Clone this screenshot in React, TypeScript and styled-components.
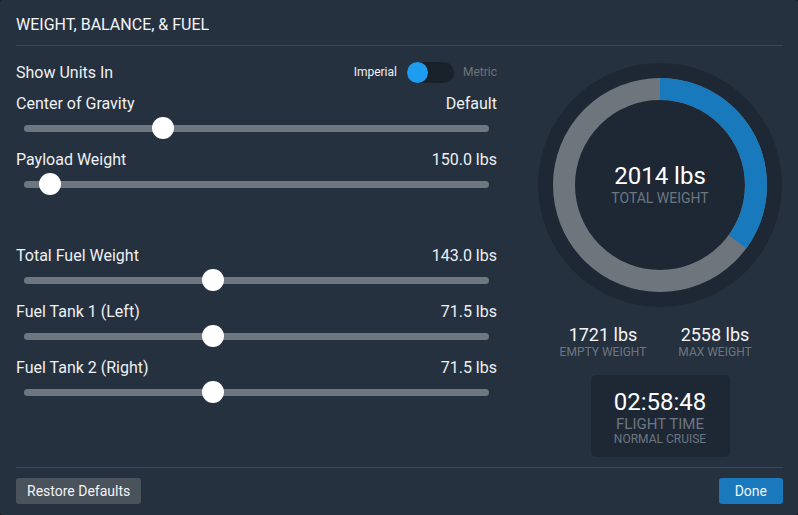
import React from "react";
import styled, { createGlobalStyle } from "styled-components";

const Global = createGlobalStyle`
  html, body { margin: 0; padding: 0; background: #151a22; }
  body { font-family: Roboto, "Noto Sans", sans-serif; }
  * { box-sizing: border-box; }
`;

const Panel = styled.div`
  width: 798px;
  height: 515px;
  background: #263140;
  border-radius: 3px;
  color: #f2f4f6;
  display: flex;
  flex-direction: column;
  overflow: hidden;
`;

const Header = styled.div`
  margin: 0 15px 0 16px;
  height: 46px;
  border-bottom: 1px solid #3b4756;
  display: flex;
  align-items: center;
  padding-top: 3px;
`;

const Title = styled.h1`
  margin: 0;
  font-size: 16px;
  font-weight: 400;
  letter-spacing: 0;
  color: #f4f5f7;
`;

const Body = styled.div`
  flex: 1;
  display: flex;
  padding: 15px 16px 0 16px;
`;

const LeftCol = styled.div`
  width: 481px;
  display: flex;
  flex-direction: column;
  gap: 10px;
`;

const RightCol = styled.div`
  margin-left: 41px;
  width: 244px;
  display: flex;
  flex-direction: column;
  align-items: center;
  padding-top: 2px;
`;

const Row = styled.div`
  display: flex;
  justify-content: space-between;
  align-items: center;
  height: ${(p: { $h?: number }) => p.$h ?? 20}px;
`;

const Label = styled.span`
  font-size: 16px;
  color: #eef0f2;
`;

const Value = styled.span`
  font-size: 16px;
  color: #eef0f2;
`;

const UnitPick = styled.div`
  display: flex;
  align-items: center;
`;

const UnitText = styled.span<{ $on?: boolean }>`
  font-size: 12px;
  color: ${(p) => (p.$on ? "#eef0f2" : "#6b747e")};
`;

const Toggle = styled.div`
  width: 47px;
  height: 21px;
  border-radius: 11px;
  background: #19212b;
  margin: 0 9px 0 10px;
  display: flex;
  align-items: center;
`;

const Knob = styled.div`
  width: 21px;
  height: 21px;
  border-radius: 50%;
  background: #1e9cf0;
`;

const SliderBlock = styled.div`
  display: flex;
  flex-direction: column;
`;

const TrackArea = styled.div`
  position: relative;
  height: 22px;
  margin: 4px 8px 0 8px;
  display: flex;
  align-items: center;
`;

const Track = styled.div`
  width: 100%;
  height: 7px;
  border-radius: 4px;
  background: #6e7780;
`;

const Thumb = styled.div`
  position: absolute;
  top: 0;
  width: 22px;
  height: 22px;
  margin-left: -11px;
  border-radius: 50%;
  background: #ffffff;
`;

const Spacer = styled.div`
  height: ${(p: { $h: number }) => p.$h}px;
`;

const Donut = styled.div`
  position: relative;
  width: 244px;
  height: 244px;
`;

const DonutCenter = styled.div`
  position: absolute;
  inset: 0;
  display: flex;
  flex-direction: column;
  align-items: center;
  justify-content: center;
  padding-bottom: 2px;
`;

const BigNum = styled.div`
  font-size: 24px;
  line-height: 28px;
  color: #ffffff;
`;

const Caption = styled.div<{ $size: number; $lh?: number }>`
  font-size: ${(p) => p.$size}px;
  line-height: ${(p) => p.$lh ?? p.$size + 2}px;
  color: #6d7680;
  text-transform: uppercase;
`;

const Stats = styled.div`
  display: grid;
  grid-template-columns: 112px 112px;
  margin-top: 17px;
  margin-left: -2px;
`;

const Stat = styled.div`
  display: flex;
  flex-direction: column;
  align-items: center;
`;

const StatNum = styled.div`
  font-size: 18px;
  line-height: 21px;
  color: #f4f5f7;
`;

const TimeBox = styled.div`
  margin-top: 16px;
  width: 139px;
  height: 82px;
  border-radius: 5px;
  background: #1e2835;
  display: flex;
  flex-direction: column;
  align-items: center;
  padding-top: 13px;
`;

const Footer = styled.div`
  margin: 0 15px 0 16px;
  border-top: 1px solid #3b4756;
  height: 48px;
  display: flex;
  justify-content: space-between;
  align-items: flex-start;
  padding-top: 10px;
`;

const Button = styled.button<{ $primary?: boolean }>`
  height: 26px;
  border: none;
  border-radius: 3px;
  padding: 0 ${(p) => (p.$primary ? 16 : 11)}px;
  font-family: Roboto, "Noto Sans", sans-serif;
  font-size: 14px;
  color: #f2f4f6;
  background: ${(p) => (p.$primary ? "#1a79bd" : "#4a525c")};
`;

function Slider({ label, value, pos }: { label: string; value: string; pos: number }) {
  return (
    <SliderBlock>
      <Row>
        <Label>{label}</Label>
        <Value>{value}</Value>
      </Row>
      <TrackArea>
        <Track />
        <Thumb style={{ left: `${pos * 100}%` }} />
      </TrackArea>
    </SliderBlock>
  );
}

function WeightRing({ frac }: { frac: number }) {
  const r = 96;
  const c = 2 * Math.PI * r;
  return (
    <svg width="244" height="244" viewBox="0 0 244 244">
      <circle cx="122" cy="122" r="122" fill="#1e2835" />
      <circle cx="122" cy="122" r={r} fill="none" stroke="#6e757d" strokeWidth="22" />
      <circle
        cx="122"
        cy="122"
        r={r}
        fill="none"
        stroke="#1879bd"
        strokeWidth="22"
        strokeDasharray={`${c * frac} ${c}`}
        transform="rotate(-90 122 122)"
      />
    </svg>
  );
}

export default function App() {
  const empty = 1721;
  const max = 2558;
  const total = 2014;
  return (
    <>
      <Global />
      <Panel>
        <Header>
          <Title>WEIGHT, BALANCE, &amp; FUEL</Title>
        </Header>
        <Body>
          <LeftCol>
            <Row $h={22}>
              <Label>Show Units In</Label>
              <UnitPick>
                <UnitText $on>Imperial</UnitText>
                <Toggle>
                  <Knob />
                </Toggle>
                <UnitText>Metric</UnitText>
              </UnitPick>
            </Row>
            <Slider label="Center of Gravity" value="Default" pos={0.299} />
            <Slider label="Payload Weight" value="150.0 lbs" pos={0.056} />
            <Spacer $h={30} />
            <Slider label="Total Fuel Weight" value="143.0 lbs" pos={0.406} />
            <Slider label="Fuel Tank 1 (Left)" value="71.5 lbs" pos={0.406} />
            <Slider label="Fuel Tank 2 (Right)" value="71.5 lbs" pos={0.406} />
          </LeftCol>
          <RightCol>
            <Donut>
              <WeightRing frac={(total - empty) / (max - empty)} />
              <DonutCenter>
                <BigNum>{total} lbs</BigNum>
                <Caption $size={14}>Total Weight</Caption>
              </DonutCenter>
            </Donut>
            <Stats>
              <Stat>
                <StatNum>{empty} lbs</StatNum>
                <Caption $size={12}>Empty Weight</Caption>
              </Stat>
              <Stat>
                <StatNum>{max} lbs</StatNum>
                <Caption $size={12}>Max Weight</Caption>
              </Stat>
            </Stats>
            <TimeBox>
              <BigNum>02:58:48</BigNum>
              <Caption $size={15} $lh={16}>Flight Time</Caption>
              <Caption $size={12}>Normal Cruise</Caption>
            </TimeBox>
          </RightCol>
        </Body>
        <Footer>
          <Button>Restore Defaults</Button>
          <Button $primary>Done</Button>
        </Footer>
      </Panel>
    </>
  );
}
